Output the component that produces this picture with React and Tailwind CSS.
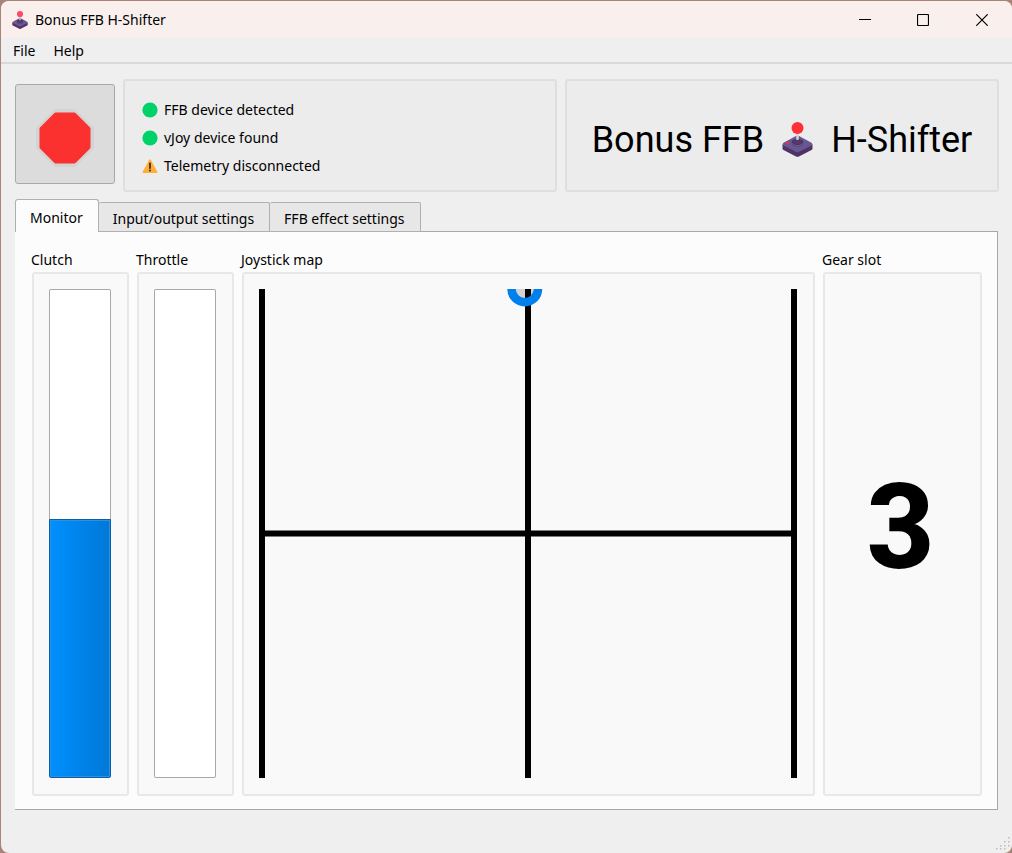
import React, { useState } from "react";

const TABS = ["Monitor", "Input/output settings", "FFB effect settings"];
const PANEL = "rounded-[3px] border-2";

function Joystick({ className, ball = "#ff2f33" }) {
  return (
    <svg viewBox="0 0 30 35" className={className} aria-hidden="true">
      <path d="M0 22v4.500q0 1 1 1.500l12.500 6.500q1.500.700 3 0l12.500-6.500q1-.500 1-1.500V22L15 27z" fill="#4f3267" />
      <path d="M1 20.700 13.500 14q1.500-.700 3 0L29 20.700q1.500 1 0 1.900l-12.500 6.400q-1.500.700-3 0L1 22.600q-1.500-.900 0-1.900z" fill="#665795" />
      <path d="M1 23l12.500 6.400q1.500.700 3 0L29 23" fill="none" stroke="#8b6c9e" strokeWidth=".6" />
      <ellipse cx="15" cy="20.800" rx="5.800" ry="3.700" fill="#402b50" />
      <path d="M9.600 21.500q5.400 4.300 10.800 0" fill="none" stroke="#8b7aad" strokeWidth=".8" />
      <path d="M10.500 20c0-3 9-3 9 0v1q-4.500 3-9 0z" fill="#56386a" />
      <rect x="13.700" y="10" width="2.600" height="8" rx="1" fill="#d5d2d8" />
      <ellipse cx="5" cy="21" rx="1.900" ry="1.200" fill="#ee2d45" />
      <circle cx="15" cy="6" r="6" fill={ball} />
    </svg>
  );
}

function Dot() {
  return (
    <svg viewBox="0 0 16 16" className="size-4" aria-hidden="true">
      <circle cx="8" cy="8" r="7.600" fill="#00d26a" />
    </svg>
  );
}

function Warning() {
  return (
    <svg viewBox="0 0 16 16" className="size-4" aria-hidden="true">
      <path d="M7 2.200q1-1.700 2 0l6.300 11.500q.700 1.300-.800 1.300h-13q-1.500 0-.800-1.300z" fill="#ffb02e" />
      <path d="M8 5.200v5" stroke="#321b41" strokeWidth="1.600" strokeLinecap="round" />
      <circle cx="8" cy="12.600" r="1" fill="#321b41" />
    </svg>
  );
}

function Bar({ label, value, width }) {
  return (
    <section className={`flex flex-col ${width}`}>
      <h2 className="h-6 leading-6">{label}</h2>
      <div className={`${PANEL} ml-px flex flex-1 border-[#e8e8e8] bg-[#f9f9f9] pt-[15px] pr-4 pb-4 pl-[15px]`}>
        <div
          role="progressbar"
          aria-label={label}
          aria-valuenow={value}
          aria-valuemin={0}
          aria-valuemax={100}
          className="flex flex-1 flex-col justify-end overflow-hidden rounded-[2px] bg-white shadow-[inset_0_0_0_1px_#a8a8a8]"
        >
          {value > 0 && (
            <div
              className="rounded-b-[2px] border border-[#0b5da5] bg-linear-to-r from-[#0090ff] to-[#0078d7] shadow-[inset_0_0_0_1px_#2a92e5]"
              style={{ height: `${value}%` }}
            />
          )}
        </div>
      </div>
    </section>
  );
}

function ShiftMap() {
  return (
    <svg className="h-full w-full flex-1" role="img" aria-label="Joystick map">
      <circle cx="49.400%" cy="0" r="10" fill="#d3d3d3" />
      <rect x="0" y="0" width="6" height="100%" />
      <rect x="50%" y="0" width="6" height="100%" transform="translate(-3 0)" />
      <rect x="100%" y="0" width="6" height="100%" transform="translate(-6 0)" />
      <rect x="0" y="50%" width="100%" height="6" transform="translate(0 -3)" />
      <circle cx="49.400%" cy="0" r="13.250" fill="none" stroke="#0080ec" strokeWidth="8.500" />
    </svg>
  );
}

export default function App() {
  const [tab, setTab] = useState(TABS[0]);
  return (
    <div className="flex min-h-screen flex-col bg-[#a98378] pt-px pl-px font-['Noto_Sans',sans-serif] text-sm text-black">
      <div className="relative flex flex-1 flex-col overflow-hidden rounded-lg bg-[#efefef]">
        <header className="flex h-[37px] items-center bg-[#f9f0ee] pl-[11px]">
          <Joystick className="h-[18px] w-4" ball="#ff4a68" />
          <h1 className="ml-[7px] flex-1">Bonus FFB H-Shifter</h1>
          <button aria-label="Minimize" className="flex h-full w-[58px] items-center justify-center">
            <svg viewBox="0 0 12 12" className="size-3"><path d="M0 5.500h12" stroke="#000" /></svg>
          </button>
          <button aria-label="Maximize" className="flex h-full w-[58px] items-center justify-center">
            <svg viewBox="0 0 12 12" className="size-3"><rect x=".5" y=".5" width="11" height="11" rx="1" fill="none" stroke="#000" strokeWidth="1.200" /></svg>
          </button>
          <button aria-label="Close" className="flex h-full w-[60px] items-center justify-center">
            <svg viewBox="0 0 12 12" className="size-3"><path d="M.3.300l11.400 11.400M11.700.300.300 11.700" stroke="#000" strokeWidth="1.200" /></svg>
          </button>
        </header>
        <nav className="flex h-[26px] border-b-2 border-[#d9d9d9] pl-1">
          <button className="h-6 px-2 pt-0.5">File</button>
          <button className="h-6 px-[10px] pt-0.5">Help</button>
        </nav>

        <main className="flex flex-1 flex-col pt-[15px] pr-[13px] pb-[43px] pl-[14px]">
          <div className="flex h-[113px] gap-2">
            <button
              aria-label="Stop"
              className="mt-[5px] flex size-[100px] shrink-0 items-center justify-center rounded-[3px] border border-[#a8a8a8] bg-[#dcdcdc] pt-2"
            >
              <svg viewBox="0 0 60 60" className="size-[60px]" aria-hidden="true">
                <path d="M21 3h18L57 21v18L39 57H21L3 39V21z" fill="#d3d3d3" stroke="#d3d3d3" strokeWidth="4" strokeLinejoin="round" />
                <path d="M20.500 6h19L54 20.500v19L39.500 54h-19L6 39.500v-19z" fill="#fa312f" stroke="#fa312f" strokeWidth="3" strokeLinejoin="round" />
              </svg>
            </button>
            <div className="grid flex-1 grid-cols-2 gap-2">
              <ul className={`${PANEL} flex flex-col justify-center border-[#dfdfdf] bg-[#ececec] pt-1 pl-[17px]`}>
                <li className="flex h-7 items-center gap-[6px]"><Dot />FFB device detected</li>
                <li className="flex h-7 items-center gap-[6px]"><Dot />vJoy device found</li>
                <li className="flex h-7 items-center gap-[6px]"><Warning />Telemetry disconnected</li>
              </ul>
              <div className={`${PANEL} flex items-center justify-center border-[#dfdfdf] bg-[#ececec] pt-2 font-[Roboto,sans-serif] text-4xl whitespace-nowrap`}>
                <span>Bonus FFB</span>
                <Joystick className="mx-[18px] h-[35px] w-[31px]" />
                <span>H-Shifter</span>
              </div>
            </div>
          </div>

          <div role="tablist" className="relative z-10 mt-[7px] -mb-px flex h-[33px] items-end">
            {TABS.map((name) => (
              <button
                key={name}
                role="tab"
                aria-selected={tab === name}
                onClick={() => setTab(name)}
                className={
                  tab === name
                    ? "h-[33px] rounded-t-[3px] border border-b-0 border-[#b0b0b0] bg-[#fcfcfc] pt-1 pr-[15px] pl-[14px]"
                    : "h-[30px] rounded-t-[2px] border border-l-0 border-[#b0b0b0] bg-[#e7e7e7] pt-1 pr-[15px] pl-[14px]"
                }
              >
                {name}
              </button>
            ))}
          </div>
          <div role="tabpanel" aria-label={tab} className="mr-px flex flex-1 gap-[7px] border-t border-r border-b border-[#a8a8a8] bg-[#fcfcfc] pt-4 pr-[15px] pb-[13px] pl-4">
            <Bar label="Clutch" value={53} width="w-[98px]" />
            <Bar label="Throttle" value={0} width="w-[98px]" />
            <section className="flex flex-1 flex-col">
              <h2 className="h-6 leading-6">Joystick map</h2>
              <div className={`${PANEL} ml-px flex flex-1 border-[#e8e8e8] bg-[#f9f9f9] pt-[15px] pr-4 pb-4 pl-[15px]`}>
                <ShiftMap />
              </div>
            </section>
            <section className="flex w-40 flex-col">
              <h2 className="h-6 leading-6">Gear slot</h2>
              <output className={`${PANEL} ml-px flex flex-1 items-center justify-center border-[#e8e8e8] bg-[#f9f9f9] pr-1 pb-3 font-[Roboto,sans-serif] text-[118px] leading-none font-extrabold`}>
                3
              </output>
            </section>
          </div>
        </main>
        <svg viewBox="0 0 14 14" className="absolute right-0.5 bottom-0.5 size-[14px]" fill="#bcbcbc" aria-hidden="true">
          {[[12, 0], [8, 4], [12, 4], [4, 8], [8, 8], [12, 8], [0, 11], [4, 11], [8, 11]].map(([x, y]) => (
            <rect key={`${x}-${y}`} x={x} y={y} width="1.500" height="1.500" />
          ))}
        </svg>
      </div>
    </div>
  );
}
